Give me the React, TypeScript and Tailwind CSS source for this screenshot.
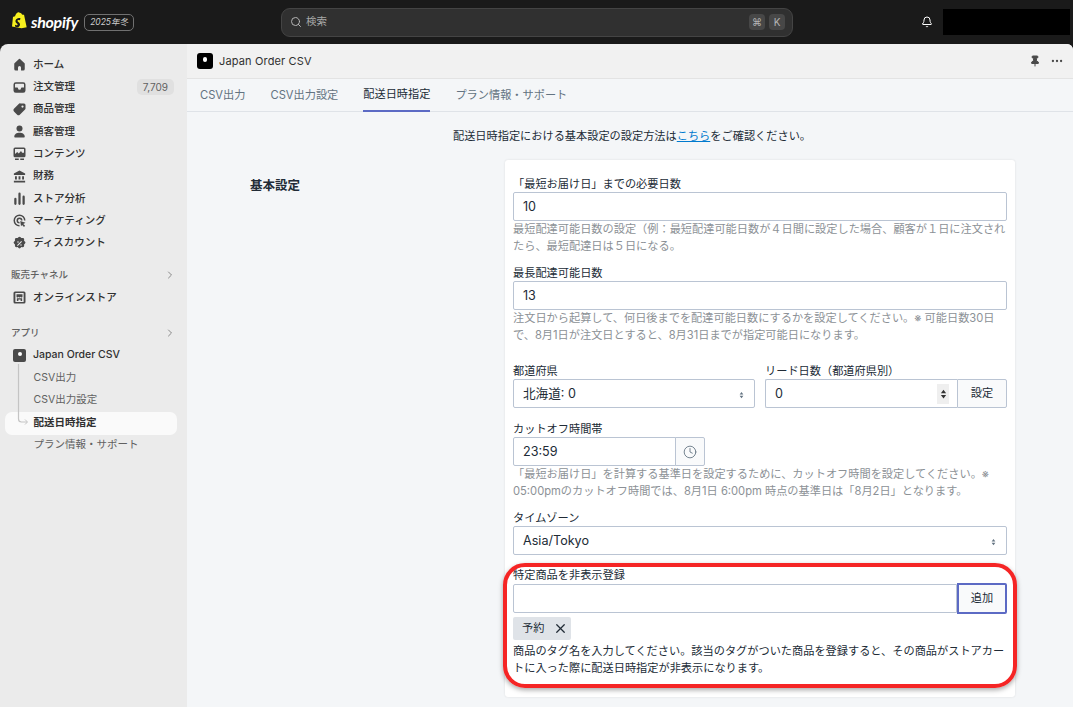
import React from "react";
import { Search, Bell, Pin, MoreHorizontal, ChevronRight, X, Clock } from "lucide-react";

const Ic = ({ children }: { children: React.ReactNode }) => (
  <svg viewBox="0 0 20 20" className="w-[15px] h-[15px] shrink-0 text-[#4a4a4a]" fill="currentColor">{children}</svg>
);

const icons: Record<string, React.ReactNode> = {
  home: <path d="M10.7 2.6a1 1 0 0 0-1.4 0L3.3 8.2A1 1 0 0 0 3 9v7a2 2 0 0 0 2 2h2.5a.5.5 0 0 0 .5-.5V14a2 2 0 0 1 4 0v3.5a.5.5 0 0 0 .5.5H15a2 2 0 0 0 2-2V9a1 1 0 0 0-.3-.8z" />,
  order: <path fillRule="evenodd" d="M5 3a3 3 0 0 0-3 3v8a3 3 0 0 0 3 3h10a3 3 0 0 0 3-3V6a3 3 0 0 0-3-3zm0 2h10a1 1 0 0 1 1 1v4h-3a1 1 0 0 0-1 1 2 2 0 0 1-4 0 1 1 0 0 0-1-1H4V6a1 1 0 0 1 1-1z" />,
  tag: <path fillRule="evenodd" d="M11.5 2H16a2 2 0 0 1 2 2v4.5a2 2 0 0 1-.6 1.4l-7 7a2.5 2.5 0 0 1-3.500 0l-4.300-4.300a2.500 2.500 0 0 1 0-3.500l7-7A2 2 0 0 1 11.500 2zM14 7.500a1.500 1.500 0 1 0 0-3 1.500 1.500 0 0 0 0 3z" />,
  user: <><circle cx="10" cy="6" r="4" /><path d="M3 17c0-3.500 3-5.500 7-5.500s7 2 7 5.500a1 1 0 0 1-1 1H4a1 1 0 0 1-1-1z" /></>,
  content: <path fillRule="evenodd" d="M4 2a2 2 0 0 0-2 2v9a2 2 0 0 0 2 2h12a2 2 0 0 0 2-2V4a2 2 0 0 0-2-2zm0 2h12v5h-2.500L12 6.500 9 10 7 8l-3 2.500zM4 16.500h5V18.500H4zm7 0h5V18.500h-5z" />,
  finance: <path d="M10 2 2.500 6v2h15V6zM4 9.500h2.500V14H4zm4.750 0h2.500V14h-2.500zm4.750 0H16V14h-2.500zM2.500 15.500h15V18h-15z" />,
  chart: <path d="M3 10.500a1.500 1.500 0 0 1 3 0V17a1.500 1.500 0 0 1-3 0zm5.500-7a1.500 1.500 0 0 1 3 0V17a1.500 1.500 0 0 1-3 0zm5.500 4a1.500 1.500 0 0 1 3 0V17a1.500 1.500 0 0 1-3 0z" />,
  target: <path fillRule="evenodd" d="M10 2a8 8 0 0 1 8 8h-2a6 6 0 1 0-6 6v2a8 8 0 0 1 0-16zm0 4a4 4 0 0 1 4 4h-2a2 2 0 1 0-2 2v2a4 4 0 0 1 0-8zm1 4.500 7 2.500-3 1.500 2.500 2.500-1.500 1.500-2.500-2.500L12 17.500z" />,
  discount: <path fillRule="evenodd" d="M8.500 1.700a2 2 0 0 1 3 0l1 1 1.500-.1a2 2 0 0 1 2.200 2.100l-.1 1.500 1 1a2 2 0 0 1 0 3l-1 1 .1 1.500a2 2 0 0 1-2.200 2.200l-1.500-.1-1 1a2 2 0 0 1-3 0l-1-1-1.500.1a2 2 0 0 1-2.100-2.200l.1-1.500-1-1a2 2 0 0 1 0-3l1-1-.1-1.500a2 2 0 0 1 2.100-2.100l1.500.1zM12.300 6.700 6.700 12.300l1 1 5.600-5.600zM8 9a1 1 0 1 0 0-2 1 1 0 0 0 0 2zm4 4a1 1 0 1 0 0-2 1 1 0 0 0 0 2z" />,
  store: <path fillRule="evenodd" d="M4 2h12a2 2 0 0 1 2 2v12a2 2 0 0 1-2 2H4a2 2 0 0 1-2-2V4a2 2 0 0 1 2-2zm.500 2v12h11V4zM6 5.500h8v3c0 .800-.700 1.500-1.400 1.500-.600 0-1.200-.400-1.300-1h-.1c-.200.600-.600 1-1.200 1s-1-.400-1.200-1h-.1c-.100.600-.700 1-1.300 1C6.700 10 6 9.300 6 8.500zm.500 5.500h7v3.500h-2V12.500h-3v2h-2z" />,
};

const nav: [string, string, string?][] = [
  ["home", "ホーム"],
  ["order", "注文管理", "7,709"],
  ["tag", "商品管理"],
  ["user", "顧客管理"],
  ["content", "コンテンツ"],
  ["finance", "財務"],
  ["chart", "ストア分析"],
  ["target", "マーケティング"],
  ["discount", "ディスカウント"],
];

function NavRow({ icon, label, badge }: { icon: string; label: string; badge?: string }) {
  return (
    <div className="h-[22.3px] flex items-center pl-[12px] pr-[13px] text-[10.5px] font-medium text-[#303030]">
      <Ic>{icons[icon]}</Ic>
      <span className="ml-[6px] flex-1">{label}</span>
      {badge && <span className="h-4 px-[6px] rounded-[5px] bg-[#e0e0e0] text-[#616161] font-normal text-[10px] flex items-center">{badge}</span>}
    </div>
  );
}

function SectionHead({ label, h }: { label: string; h: string }) {
  return (
    <div className={`${h} flex items-center pl-[11px] pr-[11px] text-[9.5px] font-medium text-[#616161]`}>
      <span className="flex-1">{label}</span>
      <ChevronRight className="w-[12px] h-[12px] text-[#8a8a8a]" />
    </div>
  );
}

function Sidebar() {
  return (
    <aside className="w-[187px] shrink-0 bg-[#ebebeb] pt-[9.6px] rounded-tl-[8px]">
      {nav.map(([i, l, b]) => <NavRow key={l} icon={i} label={l} badge={b} />)}
      <div className="h-[9.4px]" />
      <SectionHead label="販売チャネル" h="h-[23px]" />
      <NavRow icon="store" label="オンラインストア" />
      <div className="h-[13px]" />
      <SectionHead label="アプリ" h="h-[22px]" />
      <div className="h-[22.3px] flex items-center pl-[13px] text-[10.5px] font-medium text-[#303030]">
        <span className="relative w-[13px] h-[13px] rounded-[2px] bg-[#4a4a4a] shrink-0">
          <span className="absolute left-[5px] top-[3px] w-[4px] h-[4px] rounded-full bg-white" />
        </span>
        <span className="ml-[7px]">Japan Order CSV</span>
      </div>
      <div className="relative">
        {["CSV出力", "CSV出力設定"].map((t) => (
          <div key={t} className="h-[22.3px] flex items-center pl-[33.5px] text-[10.5px] text-[#616161]">{t}</div>
        ))}
        <div className="mt-[1px] ml-[5px] mr-[10px] h-[23px] rounded-[7px] bg-[#fafafa] flex items-center pl-[28.5px] text-[10.5px] font-semibold text-[#303030]">配送日時指定</div>
        <div className="h-[21px] flex items-center pl-[33.5px] text-[10.5px] text-[#616161]">プラン情報・サポート</div>
        <svg viewBox="0 0 12 64" className="absolute left-[17px] -top-[2px] w-[12px] h-[64px]" fill="none">
          <path d="M1.5 0V55a3 3 0 0 0 3 3H10" stroke="#c4c4c4" strokeWidth="1.2" />
          <path d="M8 55.5 10.500 58 8 60.500" stroke="#c4c4c4" strokeWidth="1" />
        </svg>
      </div>
    </aside>
  );
}

function TopBar() {
  return (
    <header className="h-[44px] bg-[#1a1a1a] flex items-center shrink-0 relative">
      <div className="flex items-center pl-[12px] w-[281px] shrink-0">
        <svg viewBox="0 0 20 22" className="w-[16px] h-[18px] -mt-[2px] shrink-0">
          <path fill="#f7f01e" d="M13.400 3.200 12.500 3C12 1.500 11 .6 9.800.6h-.4C9 .2 8.500 0 8 0 5.800.1 4.300 2.900 3.800 5L1.900 5.600c-.6.200-.6.200-.7.800L0 18l11.900 2.200 6.500-1.400S15.200 3.700 15.100 3.500c0-.1-.1-.2-.3-.2z" />
          <path fill="#1a1a1a" d="M10.600 7.800 9.900 10.100s-.8-.4-1.700-.3c-1.300.1-1.400.9-1.400 1.100.1 1.200 3 1.400 3.200 4.100.1 2.200-1.200 3.600-3 3.700-2.200.1-3.400-1.100-3.400-1.100l.5-2s1.200.9 2.100.8c.6 0 .8-.5.800-.9-.1-1.500-2.500-1.400-2.700-3.800-.1-2.100 1.200-4.200 4.300-4.400 1.100-.1 1.500 0 1.500 0z" />
        </svg>
        <span className="ml-[3px] text-[16px] font-bold italic text-white tracking-[-0.3px] font-['Lato','Noto_Sans',sans-serif]">shopify</span>
        <span className="ml-[6px] h-[17px] px-[5px] rounded-[5px] border border-[#707070] text-[#cfcfcf] italic text-[8.5px] flex items-center">2025年冬</span>
      </div>
      <div className="w-[512px] shrink-0 h-[29px] rounded-[9px] bg-[#303030] border border-[#444] flex items-center pl-[8px] pr-[7px]">
        <Search className="w-[12px] h-[12px] text-[#b5b5b5]" />
        <span className="ml-[4px] text-[10.5px] text-[#a8a8a8] flex-1">検索</span>
        <span className="w-[16px] h-[16px] rounded-[4px] bg-[#474747] text-[#b5b5b5] text-[10px] flex items-center justify-center">⌘</span>
        <span className="ml-[4px] w-[16px] h-[16px] rounded-[4px] bg-[#474747] text-[#b5b5b5] text-[10px] flex items-center justify-center">K</span>
      </div>
      <Bell className="ml-[128px] w-[12px] h-[12px] text-white shrink-0" />
      <div className="ml-[10px] w-[127px] h-[26px] bg-black shrink-0" />
    </header>
  );
}

const Label = ({ children }: { children: React.ReactNode }) => (
  <div className="text-[11.2px] leading-[16px] text-[#212b36]">{children}</div>
);
const Help = ({ children }: { children: React.ReactNode }) => (
  <div className="text-[11.2px] leading-[16.5px] text-[#8c9196]">{children}</div>
);
const inputCls = "h-[29px] border border-[#bac4d3] bg-white rounded-[2px] flex items-center pl-[9px] pt-[2px] text-[12.6px] text-[#212b36]";

function Updown({ large }: { large?: boolean }) {
  return (
    <svg viewBox="0 0 8 12" className={large ? "w-[7px] h-[14px] text-[#333]" : "w-[5px] h-[8px] text-[#637381]"} fill="currentColor">
      <path d="M4 1 7 5H1zM4 11 1 7h6z" />
    </svg>
  );
}

function Form() {
  return (
    <div className="w-[510px] bg-white rounded-[3px] shadow-[0_0_2px_rgba(63,63,68,0.15)] px-[8px] pt-[16px] pb-[20px]">
      <Label>「最短お届け日」までの必要日数</Label>
      <div className={inputCls}>10</div>
      <Help>最短配達可能日数の設定（例：最短配達可能日数が４日間に設定した場合、顧客が１日に注文されたら、最短配達日は５日になる。</Help>

      <div className="mt-[11px]"><Label>最長配達可能日数</Label></div>
      <div className={inputCls}>13</div>
      <Help>注文日から起算して、何日後までを配達可能日数にするかを設定してください。※ 可能日数30日で、8月1日が注文日とすると、8月31日までが指定可能日になります。</Help>

      <div className="mt-[20px] grid grid-cols-2 gap-[10px]">
        <div>
          <Label>都道府県</Label>
          <div className={`${inputCls} justify-between pr-[10px]`}>北海道: 0<Updown /></div>
        </div>
        <div>
          <Label>リード日数（都道府県別）</Label>
          <div className="flex">
            <div className={`${inputCls} flex-1 justify-between pr-[8px] rounded-r-none border-r-0`}>
              0
              <span className="w-[12px] h-[20px] -mt-[2px] bg-[#efefef] flex items-center justify-center"><Updown large /></span>
            </div>
            <div className="w-[50px] h-[29px] border border-[#bac4d3] rounded-r-[2px] bg-[#f9fafb] text-[11.2px] text-[#212b36] flex items-center justify-center">設定</div>
          </div>
        </div>
      </div>

      <div className="mt-[13px]"><Label>カットオフ時間帯</Label></div>
      <div className="flex w-[192px]">
        <div className={`${inputCls} flex-1 rounded-r-none`}>23:59</div>
        <div className="w-[30px] h-[29px] -ml-px border border-[#bac4d3] rounded-r-[2px] bg-[#f9fafb] flex items-center justify-center">
          <Clock className="w-[14px] h-[14px] text-[#637381]" strokeWidth={1.5} />
        </div>
      </div>
      <Help>「最短お届け日」を計算する基準日を設定するために、カットオフ時間を設定してください。※ 05:00pmのカットオフ時間では、8月1日 6:00pm 時点の基準日は「8月2日」となります。</Help>

      <div className="mt-[11px]"><Label>タイムゾーン</Label></div>
      <div className={`${inputCls} justify-between pr-[10px]`}>Asia/Tokyo<Updown /></div>

      <div className="mt-[12px] mb-[1px]"><Label>特定商品を非表示登録</Label></div>
      <div className="flex">
        <div className="flex-1 h-[29px] border border-[#bac4d3] rounded-l-[2px] bg-white" />
        <div className="w-[50px] h-[31px] -my-[1px] border-2 border-[#5c6ac4] rounded-r-[2px] bg-[#f9fafb] text-[11.2px] text-[#212b36] flex items-center justify-center">追加</div>
      </div>
      <div className="mt-[4px] w-[58px] h-[23px] rounded-[2px] bg-[#dfe3e8] flex items-center pl-[9px] text-[11.2px] text-[#212b36]">
        予約
        <X className="ml-[9px] w-[15px] h-[15px] text-[#212b36]" strokeWidth={2} />
      </div>
      <div className="mt-[3px] text-[11.2px] leading-[17px] text-[#212b36]">
        商品のタグ名を入力してください。該当のタグがついた商品を登録すると、その商品がストアカートに入った際に配送日時指定が非表示になります。
      </div>
    </div>
  );
}

export default function App() {
  return (
    <div className="w-[1073px] h-[707px] overflow-hidden bg-[#1a1a1a] flex flex-col font-['Inter','Noto_Sans_CJK_JP',sans-serif]">
      <TopBar />
      <div className="flex flex-1 min-h-0">
        <Sidebar />
        <main className="flex-1 min-w-0 bg-[#f4f6f8] flex flex-col rounded-tr-[6px] overflow-hidden">
          <div className="h-[35px] shrink-0 bg-[#f1f1f1] border-b border-[#e3e3e3] flex items-center pl-[10px] pr-[9px]">
            <span className="relative w-[16px] h-[16px] rounded-[3px] bg-black shrink-0">
              <span className="absolute left-[6px] top-[4px] w-[4px] h-[5px] rounded-full bg-white" />
            </span>
            <span className="ml-[6px] text-[11px] text-[#303030] flex-1 tracking-[0.15px]">Japan Order CSV</span>
            <Pin className="w-[12px] h-[12px] text-[#4a4a4a] fill-[#4a4a4a]" />
            <MoreHorizontal className="ml-[9px] w-[14px] h-[14px] text-[#4a4a4a]" />
          </div>
          <div className="h-[33px] shrink-0 border-b border-[#dfe3e8] flex pl-[13px] gap-[25px] text-[11.2px] text-[#637381]">
            <div className="flex items-center">CSV出力</div>
            <div className="flex items-center">CSV出力設定</div>
            <div className="flex items-center text-[#212b36] border-b-2 border-[#5c6ac4] h-[33px]">配送日時指定</div>
            <div className="flex items-center">プラン情報・サポート</div>
          </div>
          <div className="relative flex-1 min-h-0">
            <p className="text-center pt-[16px] text-[11.2px] leading-[16px] text-[#212b36] pl-[4px]">
              配送日時指定における基本設定の設定方法は<span className="text-[#007ace] underline">こちら</span>をご確認ください。
            </p>
            <div className="mt-[16px] flex">
              <h2 className="ml-[63px] w-[255px] pt-[16px] text-[12.5px] leading-[20px] font-semibold text-[#212b36]">基本設定</h2>
              <Form />
            </div>
            <div className="absolute left-[316px] top-[451px] w-[514px] h-[125px] rounded-[22px] border-[4px] border-[#f52525] shadow-[0_2px_5px_rgba(0,0,0,0.35)]" />
          </div>
        </main>
      </div>
    </div>
  );
}
